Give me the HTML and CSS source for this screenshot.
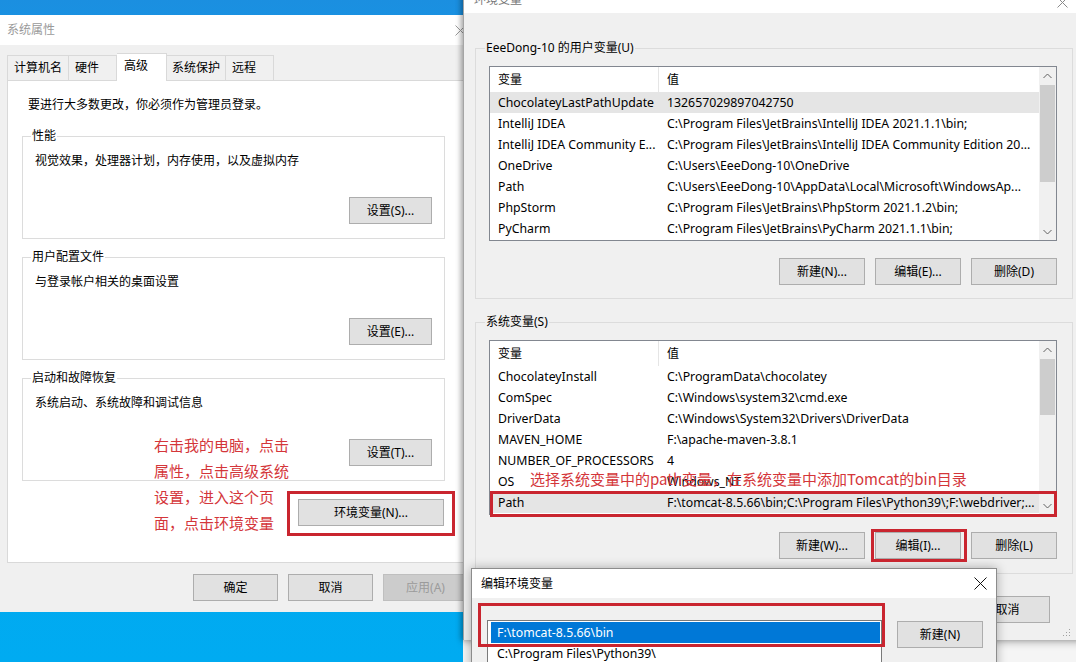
FILE: index.html
```html
<!DOCTYPE html>
<html lang="zh-CN">
<head>
<meta charset="utf-8">
<title>环境变量</title>
<link rel="stylesheet" href="styles.css">
</head>
<body>
<div class="desktop">

  <div class="win backdrop"></div>

  <section class="win sysprops">
    <div class="titlebar">
      <span class="title inactive">系统属性</span>
      <svg class="xbtn" width="11" height="11" viewBox="0 0 11 11"><path d="M0.5 0.5 L10.5 10.5 M10.5 0.5 L0.5 10.5" stroke="#9a9a9a" stroke-width="1"/></svg>
    </div>
    <div class="sys-body">
      <div class="tabs">
        <span class="tab">计算机名</span>
        <span class="tab">硬件</span>
        <span class="tab active">高级</span>
        <span class="tab">系统保护</span>
        <span class="tab">远程</span>
      </div>
      <div class="panel">
        <p class="intro">要进行大多数更改，你必须作为管理员登录。</p>
        <fieldset class="group">
          <legend>性能</legend>
          <p class="desc">视觉效果，处理器计划，内存使用，以及虚拟内存</p>
          <div class="btnrow"><span class="btn w83">设置(S)...</span></div>
        </fieldset>
        <fieldset class="group">
          <legend>用户配置文件</legend>
          <p class="desc">与登录帐户相关的桌面设置</p>
          <div class="btnrow"><span class="btn w83">设置(E)...</span></div>
        </fieldset>
        <fieldset class="group">
          <legend>启动和故障恢复</legend>
          <p class="desc">系统启动、系统故障和调试信息</p>
          <div class="btnrow"><span class="btn w83">设置(T)...</span></div>
        </fieldset>
        <div class="btnrow env-row"><span class="btn w146">环境变量(N)...</span></div>
      </div>
      <div class="footer">
        <span class="btn w85">确定</span>
        <span class="btn w85">取消</span>
        <span class="btn w85 disabled">应用(A)</span>
      </div>
    </div>
  </section>

  <section class="win envvars">
    <div class="titlebar">
      <span class="title dim">环境变量</span>
      <svg class="xbtn" width="11" height="11" viewBox="0 0 11 11"><path d="M0.5 0.5 L10.5 10.5 M10.5 0.5 L0.5 10.5" stroke="#8a8a8a" stroke-width="1"/></svg>
    </div>
    <div class="env-body">
      <fieldset class="group envgroup">
        <legend>EeeDong-10 的用户变量(U)</legend>
        <div class="listview">
          <div class="lv-main">
            <div class="lv-head"><span class="c1">变量</span><span class="c2">值</span></div>
            <div class="lv-row sel"><span class="c1">ChocolateyLastPathUpdate</span><span class="c2">132657029897042750</span></div>
            <div class="lv-row"><span class="c1">IntelliJ IDEA</span><span class="c2">C:\Program Files\JetBrains\IntelliJ IDEA 2021.1.1\bin;</span></div>
            <div class="lv-row"><span class="c1">IntelliJ IDEA Community E...</span><span class="c2">C:\Program Files\JetBrains\IntelliJ IDEA Community Edition 20...</span></div>
            <div class="lv-row"><span class="c1">OneDrive</span><span class="c2">C:\Users\EeeDong-10\OneDrive</span></div>
            <div class="lv-row"><span class="c1">Path</span><span class="c2">C:\Users\EeeDong-10\AppData\Local\Microsoft\WindowsAp...</span></div>
            <div class="lv-row"><span class="c1">PhpStorm</span><span class="c2">C:\Program Files\JetBrains\PhpStorm 2021.1.2\bin;</span></div>
            <div class="lv-row"><span class="c1">PyCharm</span><span class="c2">C:\Program Files\JetBrains\PyCharm 2021.1.1\bin;</span></div>
          </div>
          <div class="scrollbar">
            <span class="arrow"><svg width="9" height="6" viewBox="0 0 9 6"><path d="M0.5 5 L4.5 1 L8.5 5" fill="none" stroke="#606060" stroke-width="1"/></svg></span>
            <span class="thumb t-user"></span>
            <span class="track"></span>
            <span class="arrow"><svg width="9" height="6" viewBox="0 0 9 6"><path d="M0.5 1 L4.5 5 L8.5 1" fill="none" stroke="#606060" stroke-width="1"/></svg></span>
          </div>
        </div>
        <div class="btnrow gap10">
          <span class="btn w86">新建(N)...</span>
          <span class="btn w86">编辑(E)...</span>
          <span class="btn w86">删除(D)</span>
        </div>
      </fieldset>

      <fieldset class="group envgroup sysgroup">
        <legend>系统变量(S)</legend>
        <div class="listview">
          <div class="lv-main">
            <div class="lv-head"><span class="c1">变量</span><span class="c2">值</span></div>
            <div class="lv-row"><span class="c1">ChocolateyInstall</span><span class="c2">C:\ProgramData\chocolatey</span></div>
            <div class="lv-row"><span class="c1">ComSpec</span><span class="c2">C:\Windows\system32\cmd.exe</span></div>
            <div class="lv-row"><span class="c1">DriverData</span><span class="c2">C:\Windows\System32\Drivers\DriverData</span></div>
            <div class="lv-row"><span class="c1">MAVEN_HOME</span><span class="c2">F:\apache-maven-3.8.1</span></div>
            <div class="lv-row"><span class="c1">NUMBER_OF_PROCESSORS</span><span class="c2">4</span></div>
            <div class="lv-row"><span class="c1">OS</span><span class="c2">Windows_NT</span></div>
            <div class="lv-row sel"><span class="c1">Path</span><span class="c2">F:\tomcat-8.5.66\bin;C:\Program Files\Python39\;F:\webdriver;...</span></div>
          </div>
          <div class="scrollbar">
            <span class="arrow"><svg width="9" height="6" viewBox="0 0 9 6"><path d="M0.5 5 L4.5 1 L8.5 5" fill="none" stroke="#606060" stroke-width="1"/></svg></span>
            <span class="thumb t-sys"></span>
            <span class="track"></span>
            <span class="arrow"><svg width="9" height="6" viewBox="0 0 9 6"><path d="M0.5 1 L4.5 5 L8.5 1" fill="none" stroke="#606060" stroke-width="1"/></svg></span>
          </div>
        </div>
        <div class="btnrow gap10">
          <span class="btn w86">新建(W)...</span>
          <span class="btn w86">编辑(I)...</span>
          <span class="btn w86">删除(L)</span>
        </div>
      </fieldset>

      <div class="footer env-footer">
        <span class="btn w85">确定</span>
        <span class="btn w85">取消</span>
      </div>
    </div>
    <svg class="grip" width="8" height="8" viewBox="0 0 8 8"><g fill="#a0a0a0"><rect x="6" y="0" width="1" height="1"/><rect x="3" y="3" width="1" height="1"/><rect x="6" y="3" width="1" height="1"/><rect x="0" y="6" width="1" height="1"/><rect x="3" y="6" width="1" height="1"/><rect x="6" y="6" width="1" height="1"/></g></svg>
  </section>

  <section class="win editvar">
    <div class="titlebar active-title">
      <span class="title">编辑环境变量</span>
      <svg class="xbtn" width="13" height="13" viewBox="0 0 13 13"><path d="M0.5 0.5 L12.5 12.5 M12.5 0.5 L0.5 12.5" stroke="#111" stroke-width="1"/></svg>
    </div>
    <div class="edit-body">
      <div class="listbox">
        <div class="lb-item chosen">F:\tomcat-8.5.66\bin</div>
        <div class="lb-item">C:\Program Files\Python39\</div>
      </div>
      <span class="btn w86">新建(N)</span>
    </div>
  </section>

  <p class="note note-left">右击我的电脑，点击<br>属性，点击高级系统<br>设置，进入这个页<br>面，点击环境变量</p>
  <p class="note note-right">选择系统变量中的path变量，在系统变量中添加Tomcat的bin目录</p>

  <span class="mark m-env"></span>
  <span class="mark m-path"></span>
  <span class="mark m-edit"></span>
  <span class="mark m-item"></span>
</div>
</body>
</html>
```

FILE: styles.css
```css
* { box-sizing: border-box; }
html, body { margin: 0; padding: 0; }
body {
  width: 1076px;
  height: 662px;
  overflow: hidden;
  font-family: "Noto Sans", "Noto Sans CJK SC", sans-serif;
  font-size: 12px;
  color: #000;
}
.desktop {
  position: relative;
  width: 1076px;
  height: 662px;
  overflow: hidden;
  background: linear-gradient(180deg, #1b8fe0 0%, #07a5ee 35%, #00abf1 100%);
}
.win { position: absolute; }

.backdrop {
  left: 463px;
  top: 630px;
  width: 613px;
  height: 32px;
  background: #f5f5f5;
}

.titlebar {
  height: 30px;
  background: #fff;
  display: flex;
  align-items: center;
  justify-content: space-between;
}
.title { line-height: 16px; }
.title.inactive { color: #9a9a9a; }
.title.dim { color: #777; }

/* ---------- 系统属性 ---------- */
.sysprops {
  left: 0;
  top: 15px;
  width: 475px;
  height: 597px;
  background: #f0f0f0;
}
.sysprops .titlebar { padding: 0 9px 0 7px; }
.sys-body { padding: 8px 7px 0 7px; }
.tabs {
  display: flex;
  align-items: flex-end;
  height: 28px;
  margin-bottom: -1px;
  position: relative;
  z-index: 1;
}
.tab {
  height: 26px;
  min-width: 48px;
  padding: 0 6px;
  line-height: 24px;
  border: 1px solid #d9d9d9;
  border-left: none;
  background: #f0f0f0;
}
.tab:first-child { border-left: 1px solid #d9d9d9; }
.tab.active {
  height: 28px;
  min-width: 50px;
  padding: 0 7px;
  line-height: 23px;
  background: #fff;
  border-bottom: none;
}
.tab.active + .tab { padding: 0 5px; }
.panel {
  height: 483px;
  background: #fff;
  border: 1px solid #d9d9d9;
  padding: 16px 22px 0 14px;
}
.intro { margin: 0 0 15px 6px; line-height: 16px; }

.group {
  margin: 0;
  border: 1px solid #dcdcdc;
  padding: 0 12px 14px 12px;
  min-width: 0;
}
.group + .group { margin-top: 10px; }
.group legend {
  padding: 0 1px;
  margin-left: -4px;
  line-height: 16px;
}
.desc { margin: 9px 0 0 0; line-height: 16px; }
.btnrow { display: flex; justify-content: flex-end; }
.group .btnrow { margin-top: 28px; }
.env-row { margin-top: 18px; padding-right: 1px; }
.gap10 { gap: 10px; }

.btn {
  display: inline-flex;
  align-items: center;
  justify-content: center;
  height: 27px;
  background: #e1e1e1;
  border: 1px solid #adadad;
  line-height: 16px;
  white-space: nowrap;
}
.btn.disabled { background: #cccccc; border-color: #bfbfbf; color: #9b9b9b; }
.w83 { width: 83px; }
.w85 { width: 85px; }
.w86 { width: 86px; }
.w146 { width: 146px; }

.footer {
  display: flex;
  justify-content: flex-end;
  gap: 10px;
  padding-top: 11px;
}

/* ---------- 环境变量 ---------- */
.envvars {
  left: 463px;
  top: -17px;
  width: 622px;
  height: 657px;
  background: #f0f0f0;
  border-left: 1px solid #a5a5a5;
  box-shadow: -2px 0 5px rgba(0, 0, 0, 0.25), 0 3px 8px rgba(0, 0, 0, 0.2);
  z-index: 2;
}
.envvars .titlebar { padding: 0 17px 5px 10px; align-items: flex-end; }
.env-body { padding: 27px 12px 0 11px; }
.envgroup { padding: 0 15px 13px 13px; }
.envgroup + .envgroup { margin-top: 15px; }
.sysgroup { padding-bottom: 14px; }
.envgroup .listview { margin-top: 10px; }
.envgroup .btnrow { margin-top: 17px; }
.grip { position: absolute; right: 14px; bottom: 3px; }

.listview {
  display: flex;
  height: 175px;
  background: #fff;
  border: 1px solid #828790;
  overflow: hidden;
}
.lv-main { flex: 1; min-width: 0; overflow: hidden; font-size: 12.3px; }
.lv-head, .lv-row {
  display: grid;
  grid-template-columns: 169px 1fr;
  white-space: nowrap;
}
.lv-head { height: 25px; line-height: 25px; font-size: 12px; }
.lv-head .c1 { border-right: 1px solid #e5e5e5; }
.lv-row { height: 21px; line-height: 21px; }
.lv-row.sel { background: #e5e5e5; }
.c1, .c2 { padding-left: 8px; overflow: hidden; }

.scrollbar {
  width: 17px;
  flex: none;
  background: #f0f0f0;
  display: flex;
  flex-direction: column;
}
.arrow {
  height: 17px;
  flex: none;
  display: flex;
  align-items: center;
  justify-content: center;
}
.thumb { flex: none; background: #cdcdcd; margin: 1px 1px 0 1px; }
.t-user { height: 97px; }
.t-sys { height: 56px; }
.track { flex: 1; }

.env-footer { padding-top: 22px; padding-right: 23px; }

/* ---------- 编辑环境变量 ---------- */
.editvar {
  left: 471px;
  top: 568px;
  width: 526px;
  height: 110px;
  background: #f0f0f0;
  border: 1px solid #8c8c8c;
  box-shadow: 0 0 10px rgba(0, 0, 0, 0.3);
  z-index: 3;
}
.editvar .titlebar { height: 29px; padding: 0 9px 0 9px; }
.edit-body {
  display: flex;
  align-items: flex-start;
  gap: 15px;
  padding: 22px 0 0 15px;
}
.listbox {
  width: 395px;
  height: 80px;
  background: #fff;
  border: 1px solid #7a7a7a;
  padding: 1px 1px 0 3px;
  font-size: 12.3px;
}
.lb-item { height: 21px; line-height: 21px; padding-left: 6px; white-space: nowrap; }
.lb-item.chosen { background: #0078d7; color: #fff; }
.edit-body .btn { margin-top: 1px; }

/* ---------- 标注 ---------- */
.note {
  position: absolute;
  margin: 0;
  color: #d4363a;
  font-family: "Noto Sans CJK SC", sans-serif;
  font-size: 15px;
  z-index: 5;
  white-space: nowrap;
}
.note-left { left: 154px; top: 432px; line-height: 26px; }
.note-right { left: 530px; top: 469px; line-height: 20px; }

.mark {
  position: absolute;
  border: 3px solid #c9252f;
  z-index: 6;
}
.m-env { left: 287px; top: 491px; width: 168px; height: 45px; }
.m-path { left: 490px; top: 491px; width: 567px; height: 26px; }
.m-edit { left: 871px; top: 529px; width: 96px; height: 33px; }
.m-item { left: 478px; top: 603px; width: 407px; height: 44px; }
```
